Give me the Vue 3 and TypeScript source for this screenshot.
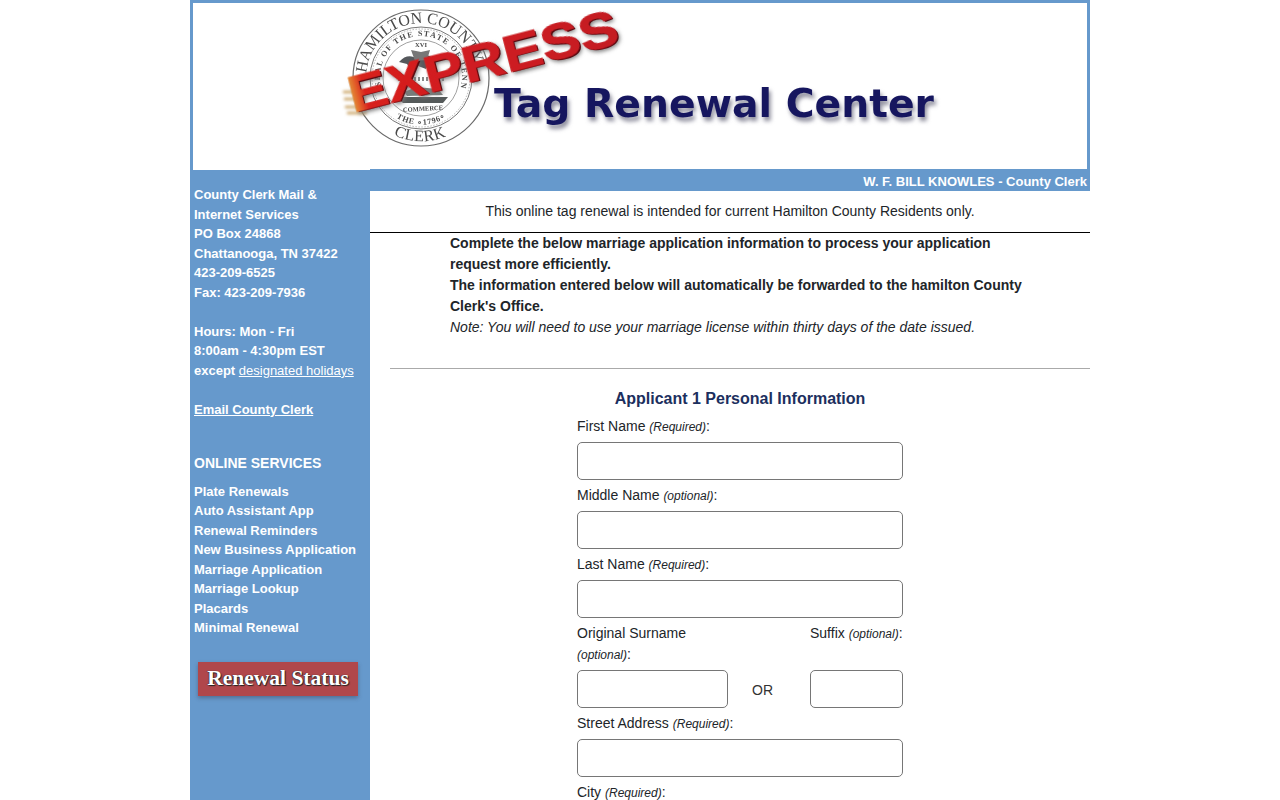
<script setup lang="ts">
const contact: string[] = [
  'County Clerk Mail &',
  'Internet Services',
  'PO Box 24868',
  'Chattanooga, TN 37422',
  '423-209-6525',
  'Fax: 423-209-7936',
]
const services: string[] = [
  'Plate Renewals',
  'Auto Assistant App',
  'Renewal Reminders',
  'New Business Application',
  'Marriage Application',
  'Marriage Lookup',
  'Placards',
  'Minimal Renewal',
]
</script>

<template>
  <div class="page">
    <header class="banner">
      <svg class="banner-art" width="894" height="166" viewBox="193 3 894 166">
        <defs>
          <filter id="soft" x="-10%" y="-30%" width="120%" height="160%"><feGaussianBlur stdDeviation="0.45" /></filter>
          <filter id="shadow" x="-10%" y="-30%" width="120%" height="170%"><feGaussianBlur stdDeviation="2.2" /></filter>
          <filter id="streak" x="-30%" y="-30%" width="160%" height="160%"><feGaussianBlur stdDeviation="1.4" /></filter>
          <linearGradient id="flame" x1="0" x2="1" y1="0" y2="0">
            <stop offset="0" stop-color="#e2a23c" />
            <stop offset="0.03" stop-color="#e2622a" />
            <stop offset="0.06" stop-color="#d8201e" />
            <stop offset="1" stop-color="#c41a24" />
          </linearGradient>
          <path id="ringTop" d="M 366.200 73.200 A 55 55 0 0 1 474.100 63.800" />
          <path id="ringBottom" d="M 385 130 A 63 63 0 0 0 457 130" />
          <path id="ringInner" d="M 381 86 A 41 41 0 1 1 461 86" />
          <path id="ringLow" d="M 385 108 A 47 47 0 0 0 457 108" />
        </defs>

        <g class="seal" filter="url(#soft)">
          <circle cx="421" cy="78" r="68" fill="#fff" stroke="#6a6a6a" stroke-width="1.2" />
          <circle cx="421" cy="78" r="51" fill="none" stroke="#777" stroke-width="1" />
          <circle cx="421" cy="78" r="49" fill="none" stroke="#999" stroke-width="0.7" stroke-dasharray="1.5 1.5" />
          <circle cx="421" cy="78" r="38" fill="none" stroke="#888" stroke-width="0.8" />
          <text class="seal-big"><textPath href="#ringTop" textLength="153">HAMILTON COUNTY</textPath></text>
          <text class="seal-big"><textPath href="#ringBottom" startOffset="10" textLength="54">CLERK</textPath></text>
          <text class="seal-small"><textPath href="#ringInner" textLength="180">SEAL OF THE STATE OF TENNESSEE</textPath></text>
          <text class="seal-small"><textPath href="#ringLow" textLength="52" startOffset="15">THE ∘1796∘</textPath></text>
          <text class="seal-tiny" x="415" y="47">XVI</text>
          <text class="seal-tiny" x="403" y="111" transform="rotate(-3 420 110)">COMMERCE</text>
          <path d="M399 62c6-7 13-7 18-3 5-6 13-5 20 2l-8 2-3 6-8-3-7 4-4-6z" fill="#55585c" />
          <path d="M411 50l10 2 9-2-3 10-12 1z" fill="#777" />
          <path d="M396 97h52l-5 6h-40z" fill="#555a5a" />
          <path d="M404 92l12-5 22 2 5 6-36 1z" fill="#777c7a" />
          <path d="M398 79h46" stroke="#888" stroke-width="4" stroke-dasharray="2 2" />
        </g>

        <g filter="url(#streak)" stroke="#c8a060" stroke-width="2.500">
          <path d="M343 92h24M344 99h22M345 107h24M347 113h20" />
        </g>
        <g transform="rotate(-14.5 350 100)">
          <text class="express express-shadow" x="352" y="116" textLength="277" lengthAdjust="spacingAndGlyphs" filter="url(#shadow)">EXPRESS</text>
          <text class="express express-dark" x="351.500" y="114" textLength="277" lengthAdjust="spacingAndGlyphs">EXPRESS</text>
          <text class="express express-top" x="350" y="112.500" textLength="277" lengthAdjust="spacingAndGlyphs" fill="url(#flame)" stroke="url(#flame)" filter="url(#soft)">EXPRESS</text>
        </g>

        <text class="tag tag-shadow" x="496" y="121" textLength="440" lengthAdjust="spacingAndGlyphs" filter="url(#shadow)">Tag Renewal Center</text>
        <text class="tag" x="494" y="117" textLength="440" lengthAdjust="spacingAndGlyphs" filter="url(#soft)">Tag Renewal Center</text>
      </svg>
    </header>

    <div class="body">
      <aside class="sidebar">
        <p v-for="line in contact" :key="line">{{ line }}</p>
        <p class="gap-top">Hours: Mon - Fri</p>
        <p>8:00am - 4:30pm EST</p>
        <p>except <a href="#">designated holidays</a></p>
        <p class="gap-top"><a href="#">Email County Clerk</a></p>
        <h2>ONLINE SERVICES</h2>
        <p v-for="item in services" :key="item">{{ item }}</p>
        <div class="status">Renewal Status</div>
      </aside>

      <main class="main">
        <div class="clerk-bar">W. F. BILL KNOWLES - County Clerk</div>
        <div class="notice">This online tag renewal is intended for current Hamilton County Residents only.</div>
        <div class="intro">
          <strong>Complete the below marriage application information to process your application request more efficiently.</strong>
          <strong>The information entered below will automatically be forwarded to the hamilton County Clerk's Office.</strong>
          <em>Note: You will need to use your marriage license within thirty days of the date issued.</em>
        </div>
        <div class="form-area">
          <form class="form">
            <h3>Applicant 1 Personal Information</h3>
            <label>First Name <small>(Required)</small>:</label>
            <input type="text" />
            <label>Middle Name <small>(optional)</small>:</label>
            <input type="text" />
            <label>Last Name <small>(Required)</small>:</label>
            <input type="text" />
            <div class="split">
              <div class="col-wide">
                <label class="two-line">Original Surname <small>(optional)</small>:</label>
                <input type="text" />
              </div>
              <span class="or">OR</span>
              <div class="col-narrow">
                <label class="two-line">Suffix <small>(optional)</small>:</label>
                <input type="text" />
              </div>
            </div>
            <label>Street Address <small>(Required)</small>:</label>
            <input type="text" />
            <label>City <small>(Required)</small>:</label>
            <input type="text" />
          </form>
        </div>
      </main>
    </div>
  </div>
</template>

<style>
html, body {
  margin: 0;
  background: #fff;
  height: 800px;
  overflow: hidden;
}
</style>

<style scoped>
.page {
  width: 900px;
  margin: 0 auto;
  font-family: "Liberation Sans", Arial, sans-serif;
  color: #212529;
  font-size: 14px;
}
.banner {
  box-sizing: border-box;
  height: 170px;
  border: 3px solid #6699cc;
  border-bottom: 0;
  background: #fff;
  overflow: hidden;
}
.banner-art {
  display: block;
}
.seal text {
  font-family: "Liberation Serif", serif;
  fill: #4a4a4a;
}
.seal-big {
  font-size: 16px;
}
.seal-small {
  font-size: 8px;
  font-weight: bold;
}
.seal-tiny {
  font-size: 6.500px;
  font-weight: bold;
}
.express {
  font-family: "Liberation Sans", sans-serif;
  font-weight: bold;
  font-size: 50px;
}
.express-top {
  stroke-width: 0.8px;
}
.express-shadow {
  fill: #777;
}
.express-dark {
  fill: #5a0a10;
}
.tag {
  font-family: "DejaVu Sans", sans-serif;
  font-weight: bold;
  font-size: 39px;
  fill: #17185f;
}
.tag-shadow {
  fill: #8d8d9c;
}
.body {
  display: flex;
  margin-top: -1px;
  height: 631px;
  overflow: hidden;
}
.sidebar {
  flex: 0 0 180px;
  box-sizing: border-box;
  background: #6699cc;
  margin-top: 1px;
  padding: 15px 4px 0;
  color: #fff;
  font-weight: bold;
  font-size: 13px;
  line-height: 19.5px;
  height: 630px;
}
.sidebar p {
  margin: 0;
  white-space: nowrap;
}
.sidebar a {
  color: #fff;
  text-decoration: underline;
  font-weight: normal;
}
.sidebar .gap-top a {
  font-weight: bold;
}
.gap-top {
  padding-top: 19.5px;
}
.sidebar h2 {
  margin: 34px 0 8.500px;
  font-size: 14px;
  line-height: 20px;
  font-weight: bold;
}
.status {
  box-sizing: border-box;
  width: 160px;
  height: 34px;
  margin: 24.500px 0 0 4px;
  background: #b0474b;
  box-shadow: 0 2px 4px rgba(60, 60, 80, 0.45);
  color: #fff;
  font-family: "Liberation Serif", "DejaVu Serif", serif;
  font-weight: bold;
  font-size: 21.500px;
  line-height: 32px;
  text-align: center;
  text-shadow: 1px 1px 1px #222, -0.5px 0 1px #333;
  white-space: nowrap;
}
.main {
  flex: 1;
  min-width: 0;
}
.clerk-bar {
  height: 22px;
  background: #6699cc;
  color: #fff;
  font-weight: bold;
  font-size: 13px;
  line-height: 26px;
  text-align: right;
  padding-right: 3px;
  overflow: hidden;
}
.notice {
  height: 41px;
  line-height: 41px;
  text-align: center;
  border-bottom: 1px solid #000;
}
.intro {
  width: 580px;
  margin-left: 80px;
  line-height: 21px;
  height: 105px;
  padding-bottom: 30px;
}
.intro strong,
.intro em {
  display: block;
}
.form-area {
  margin-left: 20px;
  border-top: 1px solid #aaa;
  padding-top: 20px;
}
.form {
  width: 326px;
  margin: 0 auto;
}
.form h3 {
  margin: 0 0 2px;
  font-size: 16px;
  line-height: 20px;
  color: #1c2f5e;
  text-align: center;
}
.form label {
  display: block;
  box-sizing: border-box;
  height: 31px;
  padding-top: 5px;
  line-height: 21px;
}
.form small {
  font-size: 12px;
  font-style: italic;
}
.form input {
  display: block;
  box-sizing: border-box;
  width: 100%;
  height: 38px;
  border: 1px solid #767676;
  border-radius: 5px;
  background: #fff;
  padding: 0;
  margin: 0;
}
.split {
  display: flex;
  align-items: flex-end;
}
.col-wide {
  flex: 0 0 151px;
}
.col-narrow {
  flex: 0 0 93px;
  margin-left: auto;
}
.form .two-line {
  height: 52px;
}
.or {
  flex: 1;
  text-align: center;
  line-height: 38px;
  padding-right: 13px;
  margin-bottom: -1px;
  color: #333;
}
.col-narrow .two-line {
  white-space: nowrap;
}
</style>
